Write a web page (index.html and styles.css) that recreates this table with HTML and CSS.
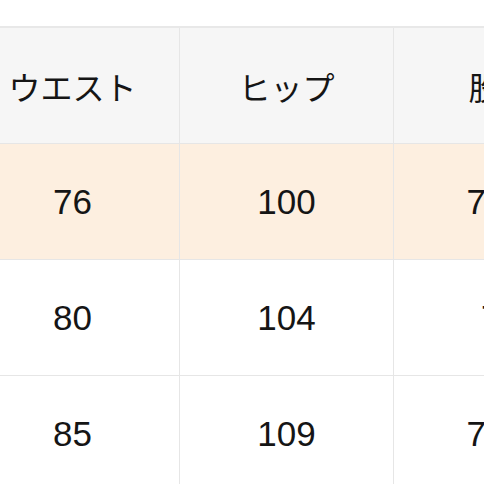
FILE: index.html
```html
<!DOCTYPE html>
<html lang="ja">
<head>
<meta charset="utf-8">
<link rel="stylesheet" href="styles.css">
</head>
<body>
<div class="table">
  <div class="row head">
    <div class="cell">ウエスト</div>
    <div class="cell">ヒップ</div>
    <div class="cell">股下</div>
  </div>
  <div class="row hl">
    <div class="cell num">76</div>
    <div class="cell num">100</div>
    <div class="cell num">74.5</div>
  </div>
  <div class="row">
    <div class="cell num">80</div>
    <div class="cell num">104</div>
    <div class="cell num">75</div>
  </div>
  <div class="row">
    <div class="cell num">85</div>
    <div class="cell num">109</div>
    <div class="cell num">76.5</div>
  </div>
</div>
</body>
</html>
```
FILE: styles.css
```css
html, body {
  margin: 0;
  padding: 0;
  background: #ffffff;
  overflow: hidden;
}
.table {
  margin-top: 26px;
  margin-left: -34px;
  border-top: 2px solid #e8e8e8;
  width: 700px;
}
.row {
  display: flex;
  height: 116px;
  box-sizing: border-box;
  border-bottom: 1px solid #e6e6e6;
  background: #ffffff;
}
.row.head {
  background: #f6f6f6;
}
.row.hl {
  background: #fdefe0;
}
.cell {
  width: 214px;
  flex: none;
  box-sizing: border-box;
  border-right: 1px solid #e6e6e6;
  display: flex;
  align-items: center;
  justify-content: center;
  color: #151515;
  font-family: "Noto Sans CJK JP", sans-serif;
  font-size: 32px;
  white-space: nowrap;
}
.cell.num {
  font-family: "Liberation Sans", Arial, sans-serif;
  font-size: 35px;
}
```
